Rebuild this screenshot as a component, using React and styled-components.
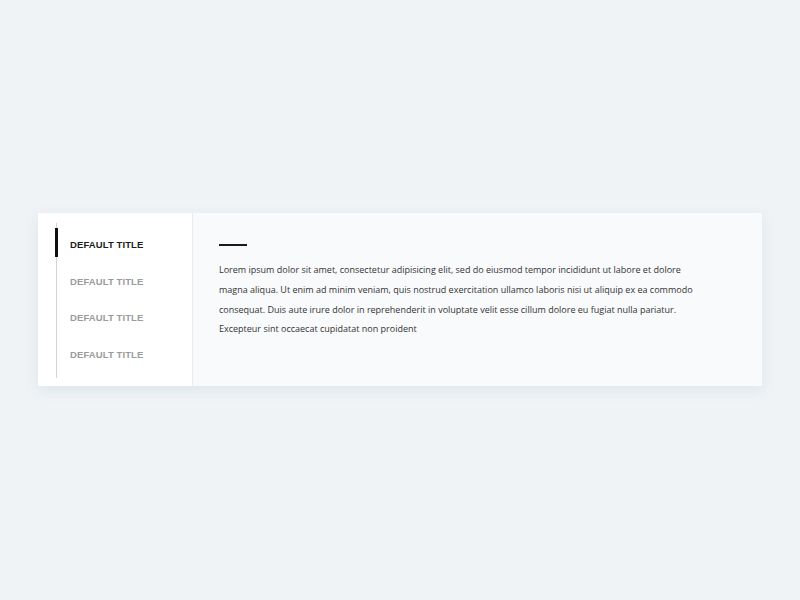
import styled, { createGlobalStyle } from 'styled-components';
import { useState } from 'react';

const GlobalStyle = createGlobalStyle`
  html, body {
    margin: 0;
    padding: 0;
    background: #eff3f6;
  }
  * { box-sizing: border-box; }
`

const Page = styled.main`
  width: 800px;
  height: 600px;
  padding: 213px 38px 0;
`

const Card = styled.section`
  display: flex;
  width: 724px;
  height: 173px;
  background: #f9fafc;
  box-shadow: 0 4px 14px rgba(40, 60, 90, 0.08);
`

const Sidebar = styled.nav`
  width: 155px;
  background: #fff;
  border-right: 1px solid #e9ecf0;
  padding: 10px 0 8px 18px;
`

const TabList = styled.ul`
  list-style: none;
  margin: 0;
  padding: 3px 0 0;
  height: 100%;
  border-left: 1px solid #d2d4d7;
`

const Tab = styled.li`
  position: relative;
  height: 36.7px;
  padding: 0 0 0 13px;
  display: flex;
  align-items: center;
  font-family: "Liberation Sans", Arial, sans-serif;
  font-weight: 700;
  font-size: 9.5px;
  letter-spacing: 0.1px;
  color: ${p => (p.$active ? '#1c1c1c' : '#9b9b9b')};
  cursor: pointer;

  &::before {
    content: '';
    position: absolute;
    left: -2px;
    top: 2px;
    width: 3px;
    height: 29px;
    background: ${p => (p.$active ? '#111' : 'transparent')};
  }
`

const Content = styled.article`
  flex: 1;
  padding: 31px 26px 0;
`

const Dash = styled.div`
  width: 28px;
  height: 2px;
  background: #1a1a1a;
  margin-bottom: 14px;
`

const Text = styled.p`
  margin: 0;
  max-width: 480px;
  font-family: "Open Sans", "Noto Sans", sans-serif;
  font-size: 9px;
  line-height: 19.8px;
  color: #333;
`

const tabs = ['Default title', 'Default title', 'Default title', 'Default title']

function App() {
  const [ativo, setAtivo] = useState(0)

  return (
    <>
      <GlobalStyle />
      <Page>
        <Card>
          <Sidebar>
            <TabList>
              {tabs.map((t, i) => (
                <Tab key={i} $active={ativo === i} onClick={() => setAtivo(i)}>
                  {t.toUpperCase()}
                </Tab>
              ))}
            </TabList>
          </Sidebar>
          <Content>
            <Dash />
            <Text>
              Lorem ipsum dolor sit amet, consectetur adipisicing elit, sed do eiusmod tempor incididunt ut labore et dolore magna aliqua. Ut enim ad minim veniam, quis nostrud exercitation ullamco laboris nisi ut aliquip ex ea commodo consequat. Duis aute irure dolor in reprehenderit in voluptate velit esse cillum dolore eu fugiat nulla pariatur. Excepteur sint occaecat cupidatat non proident
            </Text>
          </Content>
        </Card>
      </Page>
    </>
  )
}

export default App;
